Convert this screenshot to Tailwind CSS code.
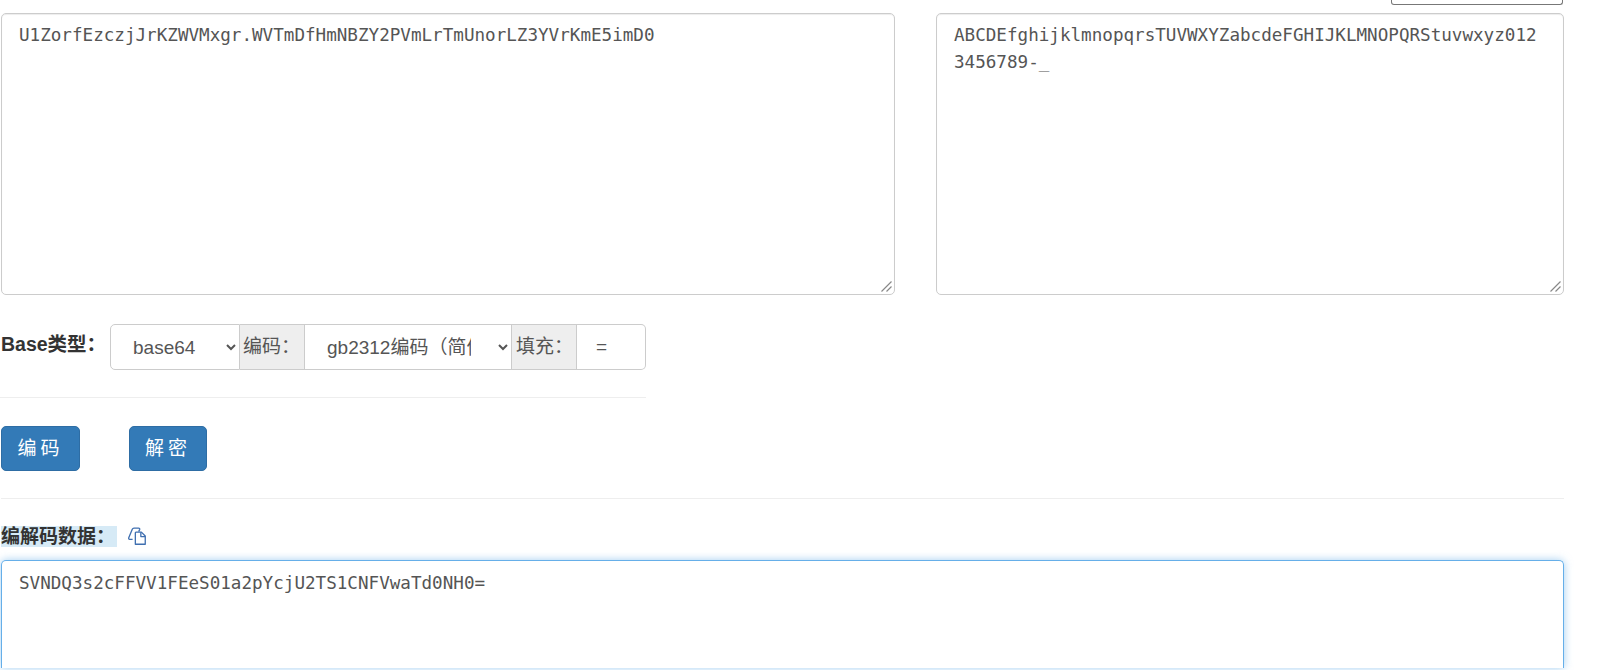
<!DOCTYPE html>
<html lang="zh" class="h-[670px] overflow-hidden">
  <head>
    <meta charset="UTF-8" />
    <title>Base编码</title>
    <script src="https://cdn.jsdelivr.net/npm/@tailwindcss/browser@4"></script>
  </head>
  <body class="bg-white h-[670px] overflow-hidden font-['Liberation_Sans','Noto_Sans_CJK_SC',sans-serif] text-[#333]">
    <div class="w-[1564px] h-[670px] pl-px">
      <!-- 顶部被裁掉的按钮 -->
      <div class="flex justify-end h-[5px]">
        <div class="w-[172px] h-[5px] mr-px border-x border-b border-[#777] rounded-b-[3px]"></div>
      </div>

      <!-- 密文和字符表 -->
      <div class="flex justify-between mt-2">
        <div class="relative w-[894px] h-[282px]">
          <textarea
            class="block w-full h-full resize-none px-[17px] py-[8px] border border-[#ccc] rounded-[5px] shadow-[inset_0_1px_1px_rgba(0,0,0,0.075)] text-[#555] text-[17.6px] leading-[27px] font-['DejaVu_Sans_Mono',monospace] outline-none"
          >U1ZorfEzczjJrKZWVMxgr.WVTmDfHmNBZY2PVmLrTmUnorLZ3YVrKmE5imD0</textarea>
          <svg class="absolute right-[3px] bottom-[3px]" width="11" height="11" viewBox="0 0 11 11" stroke="#888" stroke-width="1.2">
            <path d="M0.500 10.500L10.500 0.500M5.500 10.500L10.500 5.500" />
          </svg>
        </div>
        <div class="relative w-[628px] h-[282px]">
          <textarea
            class="block w-full h-full resize-none px-[17px] py-[8px] border border-[#ccc] rounded-[5px] shadow-[inset_0_1px_1px_rgba(0,0,0,0.075)] text-[#555] text-[17.6px] leading-[27px] font-['DejaVu_Sans_Mono',monospace] outline-none"
          >ABCDEfghijklmnopqrsTUVWXYZabcdeFGHIJKLMNOPQRStuvwxyz0123456789-_</textarea>
          <svg class="absolute right-[3px] bottom-[3px]" width="11" height="11" viewBox="0 0 11 11" stroke="#888" stroke-width="1.2">
            <path d="M0.500 10.500L10.500 0.500M5.500 10.500L10.500 5.500" />
          </svg>
        </div>
      </div>

      <!-- 类型选择 -->
      <div class="w-[646px] mt-[29px] pb-[27px] border-b border-[#eee] flex items-center -ml-px">
        <label class="w-[110px] pl-px pb-[4px] font-bold text-[19.5px] whitespace-nowrap">Base类型：</label>
        <div class="flex h-[46px] w-[536px] text-[19px] text-[#555]">
          <select class="w-[130px] pl-[18px] pr-[4px] bg-white border border-[#ccc] rounded-l-[5px] outline-none">
            <option>base64</option>
          </select>
          <span class="w-[65px] flex items-center pl-[3px] bg-[#eee] border-y border-r border-[#ccc]">编码：</span>
          <select class="w-[206px] pl-[18px] pr-[24px] bg-white border-y border-[#ccc] outline-none">
            <option>gb2312编码（简体中文）</option>
          </select>
          <span class="w-[66px] flex items-center pl-[4px] bg-[#eee] border border-[#ccc]">填充：</span>
          <input
            value="="
            class="w-[69px] pl-[19px] bg-white border-y border-r border-[#ccc] rounded-r-[5px] outline-none"
          />
        </div>
      </div>

      <!-- 操作按钮 -->
      <div class="flex gap-[49px] mt-[28px]">
        <button class="w-[79px] h-[45px] pt-[2px] bg-[#337ab7] border border-[#2e6da4] rounded-[5px] text-white text-[19px] tracking-[4px]">编码</button>
        <button class="w-[78px] h-[45px] pt-[2px] bg-[#337ab7] border border-[#2e6da4] rounded-[5px] text-white text-[19px] tracking-[4px]">解密</button>
      </div>

      <div class="mt-[27px] border-t border-[#eee]"></div>

      <!-- 结果 -->
      <div class="flex items-center mt-[26px] h-[22px]">
        <span class="w-[116px] h-[21px] flex items-center bg-[#d6eaf6] font-bold text-[19px] leading-none whitespace-nowrap">编解码数据：</span>
        <svg class="ml-[9px]" width="22" height="22" viewBox="0 0 20 20" fill="none" stroke="#3f6fb0" stroke-width="1.2" stroke-linejoin="round">
          <path d="M6 13H3.400c-.8 0-1.200-.7-.9-1.400l3.200-7.700C6 3.200 6.500 2.800 7.200 2.800h4.300c.8 0 1.200.7.900 1.400L11.500 6" />
          <path d="M9 6.500h5l3.500 3.500v7.500H8.500V7z" fill="#fff" />
          <path d="M13.500 6.500V10.500h4" />
        </svg>
      </div>

      <textarea
        class="block mt-[13px] w-full h-[108px] resize-none px-[17px] pt-[9px] pb-0 border-x border-t border-[#66afe9] rounded-t-[5px] shadow-[0_0_8px_rgba(102,175,233,0.6)] text-[#555] text-[17.6px] leading-[27px] font-['DejaVu_Sans_Mono',monospace] outline-none"
      >SVNDQ3s2cFFVV1FEeS01a2pYcjU2TS1CNFVwaTd0NH0=</textarea>
    </div>
  </body>
</html>
